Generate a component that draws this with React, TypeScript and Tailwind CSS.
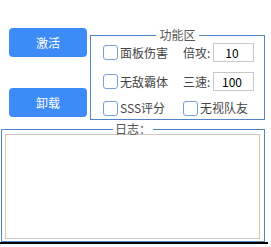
import React from 'react';

const font = { fontFamily: '"Noto Sans CJK SC", "Noto Sans", sans-serif' };

function Box({ label }: { label: string }) {
  return (
    <label className="flex items-center gap-[2px] text-[12px] leading-[18px] text-[#444]">
      <span className="w-[15px] h-[15px] rounded-[3px] border border-[#7a9fd8] bg-white shrink-0" />
      {label}
    </label>
  );
}

function NumField({ label, value }: { label: string; value: string }) {
  return (
    <div className="flex items-center text-[12px] leading-[18px] text-[#444]">
      <span className="w-[30px]">{label}</span>
      <input
        readOnly
        value={value}
        className="w-[41px] h-[19px] border border-[#c8c8c8] bg-white text-center pr-[3px] text-[12px] text-black outline-none"
      />
    </div>
  );
}

export default function App() {
  return (
    <div className="w-[271px] h-[247px] bg-white overflow-hidden select-none" style={font}>
      {/* top: buttons + 功能区 */}
      <div className="flex pt-[27px]">
        <div className="ml-[9px] w-[78px] flex flex-col pt-[1px] gap-[31px]">
          <button className="h-[29px] rounded-[4px] bg-[#3d8bf6] text-white text-[12px]">激活</button>
          <button className="h-[29px] rounded-[4px] bg-[#3d8bf6] text-white text-[12px]">卸载</button>
        </div>
        <fieldset className="ml-[3px] w-[175px] h-[93px] border border-[#4f84c8]">
          <legend className="mx-auto px-[3px] text-[12px] leading-[16px] text-[#555]">功能区</legend>
          <div className="grid grid-cols-[80px_1fr] pl-[12px] pt-[0px] gap-y-[8px]">
            <Box label="面板伤害" />
            <NumField label="倍攻:" value="10" />
            <div className="mt-[2px] col-span-2 grid grid-cols-[80px_1fr] gap-y-[8px]">
              <Box label="无敌霸体" />
              <NumField label="三速:" value="100" />
              <Box label="SSS评分" />
              <Box label="无视队友" />
            </div>
          </div>
        </fieldset>
      </div>

      {/* 日志 */}
      <fieldset className="mt-[4px] ml-[1px] w-[264px] h-[118px] border border-[#4f84c8]">
        <legend className="mx-auto px-[2px] text-[12px] leading-[10px] text-[#555]">日志：</legend>
        <textarea
          readOnly
          className="block ml-[3px] w-[255px] h-[105px] border border-[#cbc6c0] resize-none outline-none"
        />
      </fieldset>
      <div className="w-[268px] h-[2px] bg-black" />
    </div>
  );
}
